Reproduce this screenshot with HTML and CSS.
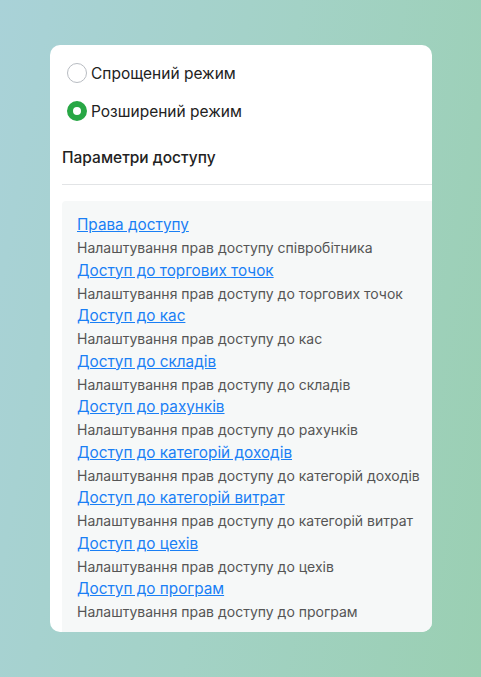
FILE: index.html
```html
<!DOCTYPE html>
<html lang="uk">
<head>
    <meta charset="UTF-8">
    <meta name="viewport" content="width=device-width, initial-scale=1.0">
    <title>Параметри доступу</title>
    <link rel="stylesheet" href="styles.css">
</head>
<body>
<div class="card">
    <!-- Режим налаштувань -->
    <div class="modes">
        <label class="mode">
            <input type="radio" name="mode" value="simple">
            <span class="radio"></span>
            Спрощений режим
        </label>
        <label class="mode">
            <input type="radio" name="mode" value="extended" checked>
            <span class="radio"></span>
            Розширений режим
        </label>
    </div>

    <h3 class="section-title">Параметри доступу</h3>
    <div class="divider"></div>

    <!-- Список розділів доступу -->
    <div class="access-list">
        <div class="access-item">
            <a href="#" class="access-link">Права доступу</a>
            <div class="access-desc">Налаштування прав доступу співробітника</div>
        </div>
        <div class="access-item">
            <a href="#" class="access-link">Доступ до торгових точок</a>
            <div class="access-desc">Налаштування прав доступу до торгових точок</div>
        </div>
        <div class="access-item">
            <a href="#" class="access-link">Доступ до кас</a>
            <div class="access-desc">Налаштування прав доступу до кас</div>
        </div>
        <div class="access-item">
            <a href="#" class="access-link">Доступ до складів</a>
            <div class="access-desc">Налаштування прав доступу до складів</div>
        </div>
        <div class="access-item">
            <a href="#" class="access-link">Доступ до рахунків</a>
            <div class="access-desc">Налаштування прав доступу до рахунків</div>
        </div>
        <div class="access-item">
            <a href="#" class="access-link">Доступ до категорій доходів</a>
            <div class="access-desc">Налаштування прав доступу до категорій доходів</div>
        </div>
        <div class="access-item">
            <a href="#" class="access-link">Доступ до категорій витрат</a>
            <div class="access-desc">Налаштування прав доступу до категорій витрат</div>
        </div>
        <div class="access-item">
            <a href="#" class="access-link">Доступ до цехів</a>
            <div class="access-desc">Налаштування прав доступу до цехів</div>
        </div>
        <div class="access-item">
            <a href="#" class="access-link">Доступ до програм</a>
            <div class="access-desc">Налаштування прав доступу до програм</div>
        </div>
    </div>
</div>
</body>
</html>
```

FILE: styles.css
```css
body, html {
    height: 100%;
    margin: 0;
}

body {
    font-family: "Inter", "Liberation Sans", Arial, sans-serif;
    background: linear-gradient(100deg, #a9d2d8 0%, #a3d2c6 50%, #9acfb2 100%);
    padding: 45px 0 0 50px;
    box-sizing: border-box;
}

.card {
    width: 382px;
    height: 587px;
    background-color: #fff;
    border-radius: 10px;
    overflow: hidden;
    padding: 18px 0 0 12px;
    box-sizing: border-box;
}

.modes {
    display: flex;
    flex-direction: column;
    gap: 18px;
    padding-left: 5px;
}

.mode {
    display: flex;
    align-items: center;
    gap: 4px;
    font-size: 15.5px;
    color: #222;
    cursor: pointer;
}

.mode input {
    display: none;
}

.radio {
    width: 20px;
    height: 20px;
    border-radius: 50%;
    border: 1px solid #b8bcc2;
    box-sizing: border-box;
    background-color: #fff;
}

.mode input:checked + .radio {
    border: 6px solid #28a745;
    background-color: #fff;
}

.section-title {
    margin: 27px 0 0;
    font-size: 15.5px;
    font-weight: 500;
    color: #222;
}

.divider {
    height: 1px;
    background-color: #e2e4e6;
    margin-top: 17px;
}

.access-list {
    margin-top: 16px;
    background-color: #f6f8f8;
    border-radius: 4px 0 0 0;
    padding: 12px 15px 16px;
    height: 100%;
}

.access-item {
    display: flex;
    flex-direction: column;
    align-items: flex-start;
}

.access-link {
    font-size: 15.3px;
    line-height: 24px;
    color: #1a7ff5;
    text-decoration: underline;
    white-space: nowrap;
}

.access-desc {
    font-size: 14px;
    line-height: 21.5px;
    color: #555;
    white-space: nowrap;
}
```
